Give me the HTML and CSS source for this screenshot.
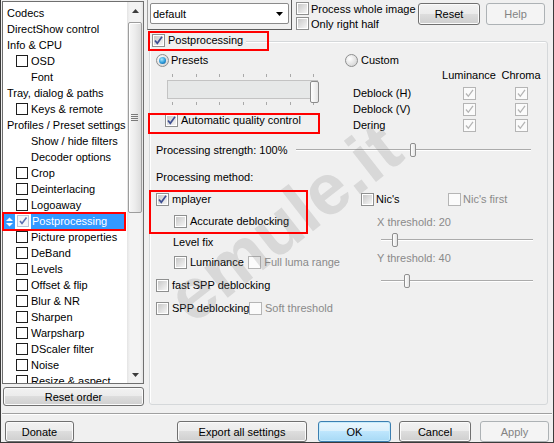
FILE: index.html
```html
<!DOCTYPE html>
<html>
<head>
<meta charset="utf-8">
<link rel="stylesheet" href="styles.css">
</head>
<body>
<div class="win">
  <div class="main">
    <div class="left">
      <div class="tree">
        <div class="tree-list">
          <div class="row">Codecs</div>
          <div class="row">DirectShow control</div>
          <div class="row">Info &amp; CPU</div>
          <div class="row"><span class="tcb"></span>OSD</div>
          <div class="row l1">Font</div>
          <div class="row">Tray, dialog &amp; paths</div>
          <div class="row"><span class="tcb"></span>Keys &amp; remote</div>
          <div class="row">Profiles / Preset settings</div>
          <div class="row l1">Show / hide filters</div>
          <div class="row l1">Decoder options</div>
          <div class="row"><span class="tcb"></span>Crop</div>
          <div class="row"><span class="tcb"></span>Deinterlacing</div>
          <div class="row"><span class="tcb"></span>Logoaway</div>
          <div class="row sel">
            <span class="updown"><svg width="11" height="16" viewBox="0 0 11 16"><polygon points="2,7 9,7 5.5,3.5" fill="#fff"/><polygon points="2,9 9,9 5.5,12.5" fill="#fff"/></svg></span>
            <span class="tcb on"><svg width="10" height="10" viewBox="0 0 10 10"><path d="M2 5 L4 7.5 L8.5 1.5" stroke="#5b6fb0" stroke-width="1.6" fill="none"/></svg></span>
            <span class="hl">Postprocessing</span>
          </div>
          <div class="row"><span class="tcb"></span>Picture properties</div>
          <div class="row"><span class="tcb"></span>DeBand</div>
          <div class="row"><span class="tcb"></span>Levels</div>
          <div class="row"><span class="tcb"></span>Offset &amp; flip</div>
          <div class="row"><span class="tcb"></span>Blur &amp; NR</div>
          <div class="row"><span class="tcb"></span>Sharpen</div>
          <div class="row"><span class="tcb"></span>Warpsharp</div>
          <div class="row"><span class="tcb"></span>DScaler filter</div>
          <div class="row"><span class="tcb"></span>Noise</div>
          <div class="row"><span class="tcb"></span>Resize &amp; aspect</div>
        </div>
        <div class="vs">
          <div class="arr"><svg width="7" height="4" viewBox="0 0 7 4"><polygon points="0,4 7,4 3.5,0" fill="#3d3d3d"/></svg></div>
          <div class="thumb"><svg width="8" height="7" viewBox="0 0 8 7"><path d="M0 0.5H7M0 2.5H7M0 4.5H7M0 6.5H7" stroke="#7a7a7a" stroke-width="1"/></svg></div>
          <div class="vs-fill"></div>
          <div class="arr"><svg width="7" height="4" viewBox="0 0 7 4"><polygon points="0,0 7,0 3.5,4" fill="#3d3d3d"/></svg></div>
        </div>
      </div>
      <div class="btn reset-order">Reset order</div>
    </div>

    <div class="right">
      <div class="topbar">
        <div class="cframe">
          <div class="combo"><span>default</span><svg width="7" height="4" viewBox="0 0 7 4"><polygon points="0,0 7,0 3.5,4" fill="#000"/></svg></div>
        </div>
        <div class="checks">
          <div class="ck"><span class="cb"></span>Process whole image</div>
          <div class="ck"><span class="cb"></span>Only right half</div>
        </div>
        <div class="btn b-reset">Reset</div>
        <div class="btn dis b-help">Help</div>
      </div>

      <div class="group">
        <div class="legend"><span class="cb"><svg width="11" height="11" viewBox="0 0 11 11"><path d="M2 5.5 L4.3 8.3 L9 1.8" stroke="#3e4f92" stroke-width="1.7" fill="none"/></svg></span>Postprocessing</div>

        <div class="sec1">
          <div class="col-l">
            <div class="ck presets"><span class="rb on"></span>Presets</div>
            <div class="tb-big">
              <div class="ticks"><i></i><i></i><i></i><i></i><i></i><i></i><i></i></div>
              <div class="chan"></div>
              <div class="ticks"><i></i><i></i><i></i><i></i><i></i><i></i><i></i></div>
              <div class="big-thumb"></div>
            </div>
            <div class="ck aqc"><span class="cb"><svg width="11" height="11" viewBox="0 0 11 11"><path d="M2 5.5 L4.3 8.3 L9 1.8" stroke="#3e4f92" stroke-width="1.7" fill="none"/></svg></span>Automatic quality control</div>
          </div>
          <div class="col-r">
            <div class="ck custom"><span class="rb"></span>Custom</div>
            <div class="cgrid">
              <span></span><span class="hd">Luminance</span><span class="hd">Chroma</span>
              <span class="lb">Deblock (H)</span>
              <span class="cc"><span class="cb dis"><svg width="11" height="11" viewBox="0 0 11 11"><path d="M2 5.5 L4.3 8.3 L9 1.8" stroke="#b4b4b4" stroke-width="1.3" fill="none"/></svg></span></span>
              <span class="cc"><span class="cb dis"><svg width="11" height="11" viewBox="0 0 11 11"><path d="M2 5.5 L4.3 8.3 L9 1.8" stroke="#b4b4b4" stroke-width="1.3" fill="none"/></svg></span></span>
              <span class="lb">Deblock (V)</span>
              <span class="cc"><span class="cb dis"><svg width="11" height="11" viewBox="0 0 11 11"><path d="M2 5.5 L4.3 8.3 L9 1.8" stroke="#b4b4b4" stroke-width="1.3" fill="none"/></svg></span></span>
              <span class="cc"><span class="cb dis"><svg width="11" height="11" viewBox="0 0 11 11"><path d="M2 5.5 L4.3 8.3 L9 1.8" stroke="#b4b4b4" stroke-width="1.3" fill="none"/></svg></span></span>
              <span class="lb">Dering</span>
              <span class="cc"><span class="cb dis"><svg width="11" height="11" viewBox="0 0 11 11"><path d="M2 5.5 L4.3 8.3 L9 1.8" stroke="#b4b4b4" stroke-width="1.3" fill="none"/></svg></span></span>
              <span class="cc"><span class="cb dis"><svg width="11" height="11" viewBox="0 0 11 11"><path d="M2 5.5 L4.3 8.3 L9 1.8" stroke="#b4b4b4" stroke-width="1.3" fill="none"/></svg></span></span>
            </div>
          </div>
        </div>

        <div class="strength">
          <span class="st-label">Processing strength: 100%</span>
          <div class="hs st-slider"><span class="th" style="left:114px"></span></div>
        </div>

        <div class="method">Processing method:</div>

        <div class="sec4">
          <div class="col-l">
            <div class="ck mplayer"><span class="cb"><svg width="11" height="11" viewBox="0 0 11 11"><path d="M2 5.5 L4.3 8.3 L9 1.8" stroke="#3e4f92" stroke-width="1.7" fill="none"/></svg></span>mplayer</div>
            <div class="ck accurate"><span class="cb"></span>Accurate deblocking</div>
            <div class="levelfix">Level fix</div>
            <div class="ck lumrow"><span class="item w75"><span class="cb"></span>Luminance</span><span class="item dtext"><span class="cb dis"></span>Full luma range</span></div>
            <div class="ck fastspp"><span class="cb"></span>fast SPP deblocking</div>
            <div class="ck spp"><span class="item w93"><span class="cb"></span>SPP deblocking</span><span class="item dtext"><span class="cb dis"></span>Soft threshold</span></div>
          </div>
          <div class="col-r">
            <div class="ck nics"><span class="item w87"><span class="cb"></span>Nic's</span><span class="item dtext"><span class="cb dis"></span>Nic's first</span></div>
            <div class="thr dtext">X threshold: 20</div>
            <div class="hs thr-slider s1"><span class="th" style="left:11px"></span></div>
            <div class="thr dtext thr2">Y threshold: 40</div>
            <div class="hs thr-slider s2"><span class="th" style="left:23px"></span></div>
          </div>
        </div>
      </div>
    </div>
  </div>

  <div class="sep"></div>

  <div class="footer">
    <div class="btn f-donate">Donate</div>
    <div class="btn f-export">Export all settings</div>
    <div class="btn def f-ok">OK</div>
    <div class="btn f-cancel">Cancel</div>
    <div class="btn dis f-apply">Apply</div>
  </div>

  <div class="wm">emule.it</div>

  <div class="mark m-tree"></div>
  <div class="mark m-title"></div>
  <div class="mark m-aqc"></div>
  <div class="mark m-mplayer"></div>
</div>
</body>
</html>
```

FILE: styles.css
```css
* { box-sizing: border-box; }

body {
  margin: 0;
  font: 11px "Liberation Sans", Arial, sans-serif;
  color: #000;
  background: #f0f0f0;
}

.win {
  position: relative;
  width: 554px;
  height: 443px;
  border: 1px solid #3b3b3b;
  border-top: 0;
  background: #f0f0f0;
  display: flex;
  flex-direction: column;
  overflow: hidden;
}

.main { display: flex; height: 410px; flex: none; }

/* ---------- left tree ---------- */
.left { width: 142px; margin-left: 1px; display: flex; flex-direction: column; }

.tree {
  height: 383px;
  margin-top: 1px;
  border: 1px solid #6f6f6f;
  background: #fff;
  display: flex;
}

.tree-list { flex: 1; padding: 3px 0 0 4px; overflow: hidden; color: #000; }

.row { height: 16px; display: flex; align-items: center; white-space: nowrap; }
.row.l1 { padding-left: 24px; }

.tcb {
  width: 12px; height: 12px;
  margin: 0 3px 0 9px;
  border: 1px solid #1e1e1e;
  background: #fff;
  flex: none;
  display: flex; align-items: center; justify-content: center;
}

.row.sel { margin-left: -4px; }
.updown { width: 11px; height: 15px; background: #3399ff; display: flex; flex: none; margin-left: 1px; }
.row.sel .tcb { margin-left: 2px; margin-right: 2px; border-color: #b9c3d6; background: #f4f6fa; }
.hl { background: #3399ff; color: #fff; height: 15px; line-height: 15px; width: 93px; padding-left: 1px; }

.vs {
  width: 16px;
  display: flex; flex-direction: column;
  background: linear-gradient(90deg, #e4e4e4, #f3f3f3 3px, #f3f3f3 13px, #e4e4e4);
}
.vs .arr { height: 17px; display: flex; align-items: center; justify-content: center; flex: none; }
.vs .thumb {
  height: 191px;
  margin: 3px 1px 0;
  border: 1px solid #9d9d9d;
  border-radius: 2px;
  background: linear-gradient(90deg, #f7f7f7, #ececec 50%, #dcdcdc);
  box-shadow: inset 1px 1px 0 #fff;
  display: flex; align-items: center; justify-content: center;
  flex: none;
}
.vs-fill { flex: 1; }

/* ---------- buttons ---------- */
.btn {
  border: 1px solid #707070;
  border-radius: 3px;
  background: linear-gradient(#f2f2f2, #ebebeb 50%, #dddddd 50%, #cfcfcf);
  box-shadow: inset 0 0 0 1px #fbfbfb;
  display: flex; align-items: center; justify-content: center;
  white-space: nowrap;
  flex: none;
}
.btn.def {
  border-color: #3c7fb1;
  background: linear-gradient(#eaf6fd, #d9f0fc 50%, #bee6fd 50%, #a7d9f5);
  box-shadow: inset 0 0 0 1px #c6ecfc;
}
.btn.dis {
  border-color: #adb2b5;
  background: #f4f4f4;
  color: #838383;
  box-shadow: none;
}

.reset-order { width: 141px; height: 19px; margin: 3px 0 0 1px; }

/* ---------- right page ---------- */
.right { width: 405px; margin-left: 3px; display: flex; flex-direction: column; }

.topbar { display: flex; height: 30px; flex: none; }

.cframe {
  width: 145px; height: 30px;
  border-left: 1px solid #a0a0a0;
  border-right: 1px solid #5c5c5c;
  border-bottom: 1px solid #5c5c5c;
  padding: 3px 2px 0;
}
.combo {
  width: 139px; height: 21px;
  border: 1px solid #8b8b8b;
  border-radius: 2px;
  background: #fff;
  display: flex; align-items: center; justify-content: space-between;
  padding: 0 5px 0 2px;
}

.checks { margin-left: 4px; padding-top: 1px; }
.ck { display: flex; align-items: center; height: 16px; white-space: nowrap; }
.checks .ck { height: 15px; }
.checks .cb { margin-right: 2px; }

.b-reset { margin: 3px 0 0 auto; width: 62px; height: 22px; }
.b-help { margin: 3px 7px 0 6px; width: 59px; height: 22px; }

.cb {
  width: 13px; height: 13px;
  flex: none;
  border: 1px solid #8e8f8f;
  padding: 1px;
  background: linear-gradient(135deg, #c8c8c8, #f5f5f5) content-box, #fff;
  margin-right: 3px;
  display: flex; align-items: center; justify-content: center;
}
.cb svg { display: block; margin: -1px; }
.cb.dis {
  border-color: #b5b5b5;
  background: #fbfbfb;
}
.rb {
  width: 13px; height: 13px;
  flex: none;
  border-radius: 50%;
  border: 1px solid #8e8f8f;
  background: radial-gradient(circle at 35% 35%, #ffffff, #d6d6d6 80%);
  display: flex; align-items: center; justify-content: center;
}
.rb.on::after {
  content: "";
  width: 7px; height: 7px;
  border-radius: 50%;
  background: radial-gradient(circle at 40% 35%, #a6e8ff, #2b98d8 55%, #0d4d84);
}
.dtext { color: #8a8a8a; }
.item { display: flex; align-items: center; height: 16px; }
.w75 { width: 75px; }
.w93 { width: 93px; }
.w87 { width: 87px; }

/* ---------- group box ---------- */
.group {
  margin: 11px 0 0 2px;
  width: 399px; height: 364px;
  border: 1px solid #d5d8da;
  border-radius: 3px;
  box-shadow: inset 1px 1px 0 #fff;
  display: flex; flex-direction: column;
}

.legend {
  align-self: flex-start;
  height: 16px;
  margin: -10px 0 0 1px;
  padding: 0 3px 0 1px;
  background: #f0f0f0;
  display: flex; align-items: center;
}

.sec1, .sec4 { display: flex; }
.col-l { width: 190px; flex: none; }
.col-r { flex: 1; }

.presets { margin-top: 4px; padding-left: 6px; }
.presets .rb { margin-right: 2px; }

.tb-big { position: relative; margin: 6px 0 0 17px; width: 151px; }
.ticks { height: 3px; margin-top: 3px; display: flex; justify-content: space-between; padding: 0 4px 0 5px; }
.ticks i { width: 1px; height: 3px; background: #a9a9a9; }
.chan {
  height: 19px; margin-top: 3px;
  border: 1px solid #c3c3c3;
  background: #e6e8e8;
}
.big-thumb {
  position: absolute; left: 143px; top: 7px;
  width: 9px; height: 22px;
  border: 1px solid #8c8c8c;
  border-radius: 2px;
  background: linear-gradient(90deg, #ffffff, #e6e6e6);
}

.aqc { margin-top: 7px; padding-left: 15px; }

.custom { margin-top: 4px; padding-left: 5px; }
.custom .rb { margin-right: 3px; }

.cgrid {
  margin: -1px 0 0 13px;
  display: grid;
  grid-template-columns: 82px 50px 36px;
  grid-template-rows: 16px 18px 16px 16px;
  column-gap: 9px;
  align-items: center;
}
.cgrid .hd { text-align: center; white-space: nowrap; display: flex; justify-content: center; }
.cgrid .lb, .cgrid .cc { align-self: end; height: 16px; display: flex; align-items: center; }
.cgrid .cc { justify-content: center; }
.cgrid .cc .cb { margin: 0; }

.strength { margin-top: 9px; padding-left: 6px; height: 16px; display: flex; align-items: center; }
.st-label { width: 140px; flex: none; white-space: nowrap; }
.st-slider { width: 235px; }

.hs { position: relative; height: 16px; }
.hs::before {
  content: "";
  position: absolute; left: 0; right: 0; top: 7px;
  height: 2px;
  background: linear-gradient(#ababab 50%, #ffffff 50%);
}
.hs .th {
  position: absolute; top: 1px;
  width: 6px; height: 14px;
  border: 1px solid #8f8f8f;
  border-radius: 2px;
  background: linear-gradient(90deg, #ffffff, #e4e4e4);
}

.method { margin-top: 11px; padding-left: 6px; height: 16px; line-height: 16px; }

.mplayer { margin-top: 6px; padding-left: 6px; }
.accurate { margin-top: 6px; padding-left: 24px; }
.levelfix { margin-top: 5px; padding-left: 23px; height: 16px; line-height: 16px; }
.lumrow { margin-top: 4px; padding-left: 24px; }
.fastspp { margin-top: 7px; padding-left: 6px; }
.spp { margin-top: 7px; padding-left: 6px; }

.nics { margin-top: 6px; padding-left: 21px; }
.nics .cb { margin-right: 2px; }
.thr { margin-top: 7px; padding-left: 37px; height: 16px; line-height: 16px; }
.thr2 { margin-top: 2px; }
.thr-slider { margin-left: 41px; width: 152px; }
.s1 { margin-top: 2px; }
.s2 { margin-top: 7px; }

/* ---------- bottom ---------- */
.sep {
  margin: 3px 1px 0;
  height: 2px;
  flex: none;
  border-top: 1px solid #a0a0a0;
  border-bottom: 1px solid #ffffff;
}

.footer { display: flex; margin-top: 6px; height: 21px; padding-left: 4px; flex: none; }
.f-donate { width: 69px; }
.f-export { width: 130px; margin-left: 103px; }
.f-ok { width: 73px; margin-left: 11px; }
.f-cancel { width: 72px; margin-left: 8px; }
.f-apply { width: 69px; margin-left: 9px; }

/* ---------- overlays ---------- */
.wm {
  position: absolute;
  left: 147px; top: 186px;
  font: bold 72px/72px "Liberation Sans", Arial, sans-serif;
  color: rgba(120, 120, 120, 0.2);
  transform: rotate(-38deg);
  white-space: nowrap;
  pointer-events: none;
}

.mark { position: absolute; border: 2px solid #ff0000; pointer-events: none; }
.m-tree { left: 1px; top: 212px; width: 124px; height: 19px; }
.m-title { left: 147px; top: 31px; width: 121px; height: 20px; }
.m-aqc { left: 147px; top: 113px; width: 172px; height: 21px; }
.m-mplayer { left: 148px; top: 190px; width: 159px; height: 44px; }
```
